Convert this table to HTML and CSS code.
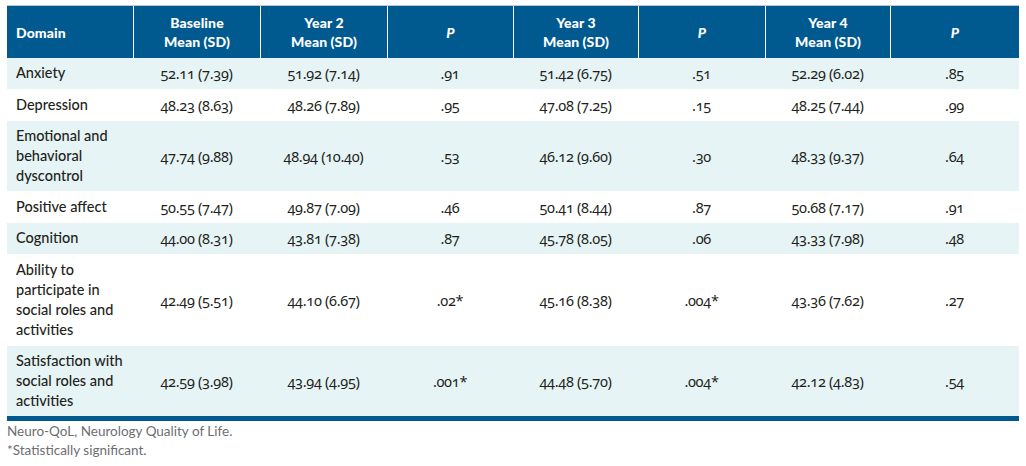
FILE: index.html
```html
<!DOCTYPE html>
<html lang="en">
<head>
<meta charset="utf-8">
<title>Neuro-QoL domains</title>
<link rel="stylesheet" href="styles.css">
</head>
<body>
<div class="wrap">
<table class="qol">
  <colgroup>
    <col class="c-dom"><col class="c-m"><col class="c-m"><col class="c-p"><col class="c-m3"><col class="c-m"><col class="c-m3"><col class="c-plast">
  </colgroup>
  <thead>
    <tr>
      <th class="left">Domain</th>
      <th>Baseline<br>Mean (SD)</th>
      <th>Year 2<br>Mean (SD)</th>
      <th><i>P</i></th>
      <th>Year 3<br>Mean (SD)</th>
      <th><i>P</i></th>
      <th>Year 4<br>Mean (SD)</th>
      <th><i>P</i></th>
    </tr>
  </thead>
  <tbody>
    <tr class="alt">
      <td class="left">Anxiety</td><td>52.11 (7.39)</td><td>51.92 (7.14)</td><td>.91</td><td>51.42 (6.75)</td><td>.51</td><td>52.29 (6.02)</td><td>.85</td>
    </tr>
    <tr class="roomy">
      <td class="left">Depression</td><td>48.23 (8.63)</td><td>48.26 (7.89)</td><td>.95</td><td>47.08 (7.25)</td><td>.15</td><td>48.25 (7.44)</td><td>.99</td>
    </tr>
    <tr class="alt">
      <td class="left">Emotional and<br>behavioral<br>dyscontrol</td><td>47.74 (9.88)</td><td>48.94 (10.40)</td><td>.53</td><td>46.12 (9.60)</td><td>.30</td><td>48.33 (9.37)</td><td>.64</td>
    </tr>
    <tr class="roomy">
      <td class="left">Positive affect</td><td>50.55 (7.47)</td><td>49.87 (7.09)</td><td>.46</td><td>50.41 (8.44)</td><td>.87</td><td>50.68 (7.17)</td><td>.91</td>
    </tr>
    <tr class="alt">
      <td class="left">Cognition</td><td>44.00 (8.31)</td><td>43.81 (7.38)</td><td>.87</td><td>45.78 (8.05)</td><td>.06</td><td>43.33 (7.98)</td><td>.48</td>
    </tr>
    <tr class="roomy">
      <td class="left">Ability to<br>participate in<br>social roles and<br>activities</td><td>42.49 (5.51)</td><td>44.10 (6.67)</td><td>.02*</td><td>45.16 (8.38)</td><td>.004*</td><td>43.36 (7.62)</td><td>.27</td>
    </tr>
    <tr class="alt">
      <td class="left">Satisfaction with<br>social roles and<br>activities</td><td>42.59 (3.98)</td><td>43.94 (4.95)</td><td>.001*</td><td>44.48 (5.70)</td><td>.004*</td><td>42.12 (4.83)</td><td>.54</td>
    </tr>
  </tbody>
</table>
<div class="notes">
  <p>Neuro-QoL, Neurology Quality of Life.</p>
  <p>*Statistically significant.</p>
</div>
</div>
</body>
</html>
```
FILE: styles.css
```css
html, body {
  margin: 0;
  padding: 0;
  background: #ffffff;
}

.wrap {
  padding: 5px 7px 0 7px;
  font-family: "Lato", "Open Sans", sans-serif;
}

.qol {
  width: 1012px;
  table-layout: fixed;
  border-collapse: separate;
  border-spacing: 0;
  border-top: 1px solid #b9c7d3;
  border-bottom: 5px solid #005a8f;
  color: #231f20;
}

.c-dom { width: 126px; }
.c-m { width: 127px; }
.c-p { width: 126px; }
.c-m3 { width: 125px; }
.c-plast { width: 129px; }

.qol th {
  background: #005a8f;
  color: #ffffff;
  font-weight: 900;
  font-size: 14px;
  line-height: 19px;
  height: 52px;
  box-sizing: border-box;
  padding: 7px 4px 7px 4px;
  text-align: center;
  vertical-align: middle;
  letter-spacing: 0.1px;
}

.qol th + th {
  border-left: 1px solid #ffffff;
}

.qol th.left {
  text-align: left;
  padding-left: 9px;
}

.qol td {
  font-size: 14.5px;
  font-weight: 500;
  line-height: 20px;
  padding: 5px 4px 6px 4px;
  text-align: center;
  vertical-align: middle;
}

.qol tr.roomy td {
  padding-top: 6px;
}

.qol td:not(.left) {
  font-family: "Noto Sans", "Open Sans", sans-serif;
  font-size: 14.5px;
  font-weight: 400;
  font-variant-numeric: oldstyle-nums;
  letter-spacing: -0.3px;
}

.qol td.left {
  text-align: left;
  padding-left: 9px;
}

.qol tr.alt td {
  background: #e6f4f5;
  padding-bottom: 5.5px;
}

.notes {
  margin-top: 1px;
  color: #6d6e71;
  font-size: 13.5px;
  line-height: 19px;
}

.notes p {
  margin: 0;
}
```
